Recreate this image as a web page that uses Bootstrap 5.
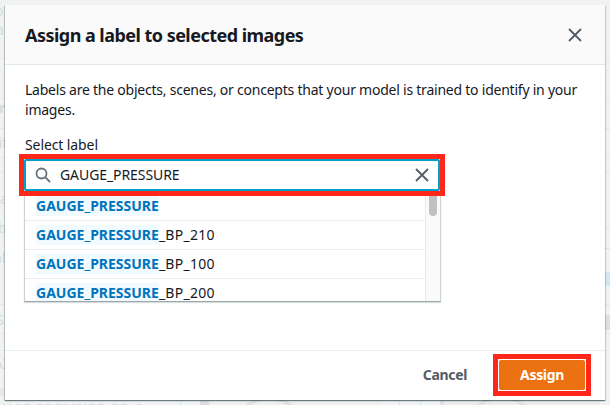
<!DOCTYPE html>
<html lang="en">
<head>
<meta charset="utf-8">
<meta name="viewport" content="width=device-width, initial-scale=1">
<title>Assign a label</title>
<link href="https://cdn.jsdelivr.net/npm/bootstrap@5.3.0/dist/css/bootstrap.min.css" rel="stylesheet">
<style>
  body { width: 610px; height: 405px; background: #f1f3f3; color: #16191f; font: 14px/20px "Noto Sans", "Open Sans", sans-serif; }
  /* dimmed page behind the dialog */
  .backdrop-page { color: #d8dbdb; font-size: 14px; }
  .backdrop-page > * { position: absolute; white-space: nowrap; line-height: 20px; }
  .rule { height: 1px; background: #e6e9e9; }
  .dialog { width: 600px; height: 395px; margin: 5px; background: #fff; box-shadow: 0 1px 1px 0 rgba(0,28,36,.38), 1px 1px 1px 0 rgba(0,28,36,.13), -1px 1px 1px 0 rgba(0,28,36,.18); }
  .dialog-head { height: 60px; background: #fafafa; border-bottom: 1px solid #e3e8e8; padding: 0 23px 0 20px; }
  .dialog-title { font-size: 18px; line-height: 22px; letter-spacing: -.53px; }
  .dialog-body { padding: 15px 20px 0; }
  .dialog-foot { height: 50px; border-top: 1px solid #eaeded; padding: 0 14px 2px 0; }
  .intro { letter-spacing: -.23px; }
  .lbl { letter-spacing: -.1px; margin: 15px 0 -1px; }
  .mark-red { border: 5px solid #ff2719; }
  .search-wrap { width: 426px; height: 42px; margin-left: -6px; }
  .search { height: 32px; border: 2px solid #00a1c9; border-radius: 2px; padding: 0 9px; }
  .search input { outline: 0; background: transparent; color: #16191f; letter-spacing: -.08px; padding: 0; margin-left: 9px; }
  .options { width: 417px; height: 106px; margin-left: -1px; border: 1px solid #cdd2d2; border-top: 0; border-bottom-color: #9ba7a8; box-shadow: 0 1px 1px rgba(0,28,36,.15); }
  .opt { height: 29px; padding: 0 11px; border-bottom: 1px solid #eaeded; letter-spacing: .25px; }
  .opt:first-child { height: 25px; padding-bottom: 4px; }
  .opt b { color: #0073bb; background: #f1faff; letter-spacing: 0; }
  .track { width: 15px; background: #fafafa; border-left: 1px solid #e8e8e8; }
  .thumb { width: 8px; height: 20px; background: #c1c1c1; border-radius: 0 0 4px 4px; margin-left: 3px; }
  .act { font-size: 14px; font-weight: 700; line-height: 20px; padding: 0; letter-spacing: -.35px; }
  .cancel, .cancel:hover { color: #545b64; margin-right: 26px; }
  .assign-wrap { width: 98px; height: 42px; }
  .assign, .assign:hover { background: #ec7211; color: #fff; border: 1px solid #fff; border-radius: 3px; }
</style>
</head>
<body class="position-relative overflow-hidden">
<div class="backdrop-page position-absolute top-0 start-0 w-100 h-100 overflow-hidden" aria-hidden="true">
  <span style="left:-5px;top:1px">o</span>
  <span style="left:-4px;top:20px">a</span>
  <b style="left:-1px;top:98px">r</b>
  <span style="left:-1px;top:133px">if</span>
  <span style="left:0;top:189px">a</span>
  <span style="left:-2px;top:218px">b</span>
  <span style="left:-6px;top:248px">al</span>
  <span style="left:-4px;top:310px">S</span>
  <span style="left:-6px;top:354px">AI</span>
  <i class="rule w-100" style="top:58px"></i>
  <i class="rule w-100" style="top:98px"></i>
  <i class="rule w-100" style="top:128px"></i>
  <i class="rule w-100" style="top:157px"></i>
  <i class="rule w-100" style="top:172px"></i>
  <i class="rule w-100" style="top:228px"></i>
  <i class="rule w-100" style="top:304px"></i>
  <i class="rule w-100" style="top:333px"></i>
  <i style="left:600px;top:248px;width:10px;height:1px;background:#cdeef1"></i>
  <i style="left:600px;top:272px;width:10px;height:14px;background:#d5e5f1"></i>
  <i style="left:600px;top:315px;width:10px;height:15px;background:#dfe1e1"></i>
  <i style="left:0;top:388px;width:10px;height:8px;background:#e8eaea"></i>
  <b style="left:-8px;top:399px;font-size:14px">AUGE_PRESSURE_BP_6</b>
  <i style="left:180px;top:401px;width:1px;height:4px;background:#cfe9f2"></i>
  <i style="left:200px;top:401px;width:9px;height:4px;background:#dcdede"></i>
  <i style="left:209px;top:401px;width:172px;height:4px;background:#eeefef"></i>
  <i style="left:232px;top:396px;width:74px;height:74px;border:4px solid #e5e1e1;border-radius:50%"></i>
  <i style="left:399px;top:401px;width:1px;height:4px;background:#cfe9f2"></i>
  <i style="left:420px;top:401px;width:1px;height:4px;background:#cfe9f2"></i>
  <i style="left:440px;top:401px;width:4px;height:4px;background:#dfe1e1"></i>
  <i style="left:444px;top:401px;width:156px;height:4px;background:#ececec"></i>
  <i style="left:464px;top:396px;width:74px;height:74px;border:3px solid #dfe1e1;border-radius:50%"></i>
</div>

<main class="dialog position-relative d-flex flex-column">
  <header class="dialog-head d-flex align-items-center justify-content-between">
    <h1 class="dialog-title fw-bold m-0">Assign a label to selected images</h1>
    <button class="btn p-0 border-0 d-flex" aria-label="Close">
      <svg width="14" height="14" viewBox="0 0 14 14" fill="none" stroke="#545b64" stroke-width="1.8"><path d="M1 1l12 12M13 1L1 13"/></svg>
    </button>
  </header>
  <section class="dialog-body flex-grow-1">
    <p class="intro m-0">Labels are the objects, scenes, or concepts that your model is trained to identify in your<br>images.</p>
    <label class="lbl d-block" for="q">Select label</label>
    <div class="search-wrap mark-red position-relative">
      <div class="search d-flex align-items-center bg-white">
        <svg width="16" height="16" viewBox="0 0 16 16" fill="none" stroke="#687078" stroke-width="1.8"><circle cx="6.5" cy="6.5" r="5"/><path d="M10.2 10.2L15 15"/></svg>
        <input id="q" class="border-0 flex-grow-1" value="GAUGE_PRESSURE">
        <svg width="14" height="14" viewBox="0 0 14 14" fill="none" stroke="#545b64" stroke-width="1.8"><path d="M1 1l12 12M13 1L1 13"/></svg>
      </div>
    </div>
    <div class="options d-flex overflow-hidden">
      <div class="flex-grow-1">
        <div class="opt d-flex align-items-center"><b>GAUGE_PRESSURE</b></div>
        <div class="opt d-flex align-items-center"><b>GAUGE_PRESSURE</b>_BP_210</div>
        <div class="opt d-flex align-items-center"><b>GAUGE_PRESSURE</b>_BP_100</div>
        <div class="opt d-flex align-items-center"><b>GAUGE_PRESSURE</b>_BP_200</div>
      </div>
      <div class="track"><div class="thumb"></div></div>
    </div>
  </section>
  <footer class="dialog-foot d-flex align-items-center justify-content-end">
    <button class="btn act cancel border-0">Cancel</button>
    <div class="assign-wrap mark-red d-flex"><button class="btn act assign flex-grow-1">Assign</button></div>
  </footer>
</main>
<script src="https://cdn.jsdelivr.net/npm/bootstrap@5.3.0/dist/js/bootstrap.bundle.min.js"></script>
</body>
</html>
